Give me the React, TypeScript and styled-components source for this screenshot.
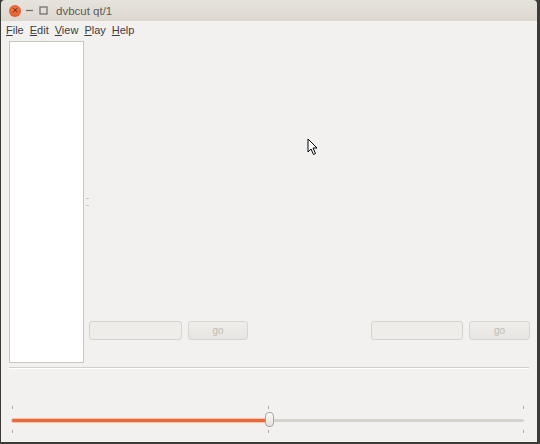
import React from 'react';
import styled, { createGlobalStyle } from 'styled-components';

const GlobalStyle = createGlobalStyle`
  html, body {
    margin: 0;
    padding: 0;
    background: #3c3b37;
  }
  body {
    font-family: "Liberation Sans", "DejaVu Sans", sans-serif;
  }
`;

const Frame = styled.div`
  position: relative;
  width: 540px;
  height: 444px;
  box-sizing: border-box;
  padding: 0 3px 2px 1px;
  background: #3c3b37;
  display: flex;
  flex-direction: column;
`;

const TitleBar = styled.div`
  height: 21px;
  display: flex;
  align-items: center;
  padding-left: 8px;
  background: linear-gradient(#e6e3dd, #dcd8d0);
  border-radius: 4px 4px 0 0;
  flex-shrink: 0;
`;

const WinButtons = styled.div`
  display: flex;
  align-items: center;
  gap: 3px;
  width: 47px;
`;

const CloseButton = styled.div`
  width: 12px;
  height: 12px;
  border-radius: 50%;
  background: radial-gradient(circle at 50% 40%, #f37a4c, #dc5022);
  display: flex;
  align-items: center;
  justify-content: center;
  color: #7a2a10;
  font-size: 8px;
  line-height: 1;
`;

const SmallButton = styled.div`
  width: 11px;
  height: 11px;
  display: flex;
  align-items: center;
  justify-content: center;
`;

const Title = styled.div`
  font-size: 11.5px;
  color: #5e5c58;
`;

const Menubar = styled.div`
  height: 18px;
  display: flex;
  align-items: center;
  gap: 6px;
  padding-left: 5px;
  background: #f2f1ef;
  font-size: 11px;
  color: #3c3c3c;
  flex-shrink: 0;
`;

const MenuItem = styled.span`
  & u {
    text-decoration-thickness: 1px;
  }
`;

const Body = styled.div`
  flex: 1;
  background: #f2f1f0;
  padding: 2px 7px 0 8px;
  display: flex;
  flex-direction: column;
`;

const TopRow = styled.div`
  display: flex;
  height: 322px;
`;

const FileList = styled.div`
  width: 73px;
  background: #ffffff;
  border: 1px solid #c8c5bf;
`;

const Splitter = styled.div`
  width: 5px;
  display: flex;
  align-items: center;
  justify-content: center;
`;

const Grip = styled.div`
  width: 2px;
  height: 6px;
  border-top: 1px dotted #c9c6c0;
  border-bottom: 1px dotted #c9c6c0;
`;

const RightPane = styled.div`
  flex: 1;
  display: flex;
  flex-direction: column;
  justify-content: flex-end;
  padding-bottom: 23px;
`;

const ControlRow = styled.div`
  display: flex;
  justify-content: space-between;
`;

const Group = styled.div`
  display: flex;
  gap: 6px;
`;

const LineEdit = styled.div<{ w: number }>`
  width: ${p => p.w}px;
  height: 19px;
  box-sizing: border-box;
  border: 1px solid #d6d3ce;
  border-radius: 3px;
  background: #efede9;
`;

const GoButton = styled.div<{ w: number }>`
  width: ${p => p.w}px;
  height: 19px;
  box-sizing: border-box;
  border: 1px solid #d8d5d0;
  border-radius: 3px;
  background: linear-gradient(#f0eeeb, #e7e5e1);
  display: flex;
  align-items: center;
  justify-content: center;
  font-size: 10px;
  color: #bdbab5;
`;

const Separator = styled.div`
  margin-top: 4px;
  margin-right: 1px;
  height: 1px;
  background: #d3d0ca;
  border-bottom: 1px solid #ffffff;
`;

const SliderArea = styled.div`
  flex: 1;
  display: flex;
  flex-direction: column;
  justify-content: flex-end;
  padding: 0 6px 8px 3px;
`;

const TickRow = styled.div`
  position: relative;
  height: 4px;
`;

const Tick = styled.div<{ left: string }>`
  position: absolute;
  left: ${p => p.left};
  top: 0;
  width: 1px;
  height: 3px;
  background: #a9a6a1;
`;

const SliderBox = styled.div`
  position: relative;
  height: 20px;
  display: flex;
  align-items: center;
`;

const Track = styled.div`
  flex: 1;
  height: 3px;
  border-radius: 2px;
  background: #d6d3ce;
  display: flex;
`;

const Filled = styled.div`
  height: 3px;
  border-radius: 2px;
  background: #e9683e;
  box-shadow: 0 0 0 1px #f6c3a6;
`;

const Handle = styled.div`
  position: absolute;
  top: 2px;
  width: 9px;
  height: 15px;
  margin-left: -3px;
  box-sizing: border-box;
  border: 1px solid #a8a5a0;
  border-radius: 4px;
  background: linear-gradient(#fbfaf9, #e3e1de);
`;

const Cursor = styled.svg`
  position: absolute;
  left: 307px;
  top: 138px;
`;

const menus = ['File', 'Edit', 'View', 'Play', 'Help'];

export default function App() {
  const pos = 50;
  return (
    <>
      <GlobalStyle />
      <Frame>
        <TitleBar>
          <WinButtons>
            <CloseButton>✕</CloseButton>
            <SmallButton>
              <svg width="9" height="9" viewBox="0 0 9 9">
                <line x1="1" y1="4.5" x2="8" y2="4.5" stroke="#6b6964" strokeWidth="1.2" />
              </svg>
            </SmallButton>
            <SmallButton>
              <svg width="9" height="9" viewBox="0 0 9 9">
                <rect x="1" y="1" width="7" height="7" fill="none" stroke="#6b6964" strokeWidth="1.2" />
              </svg>
            </SmallButton>
          </WinButtons>
          <Title>dvbcut qt/1</Title>
        </TitleBar>
        <Menubar>
          {menus.map(m => (
            <MenuItem key={m}>
              <u>{m[0]}</u>
              {m.slice(1)}
            </MenuItem>
          ))}
        </Menubar>
        <Body>
          <TopRow>
            <FileList />
            <Splitter>
              <Grip />
            </Splitter>
            <RightPane>
              <ControlRow>
                <Group>
                  <LineEdit w={93} />
                  <GoButton w={60}>go</GoButton>
                </Group>
                <Group>
                  <LineEdit w={92} />
                  <GoButton w={61}>go</GoButton>
                </Group>
              </ControlRow>
            </RightPane>
          </TopRow>
          <Separator />
          <SliderArea>
            <TickRow>
              <Tick left="0%" />
              <Tick left="50%" />
              <Tick left="calc(100% - 1px)" />
            </TickRow>
            <SliderBox>
              <Track>
                <Filled style={{ width: `${pos}%` }} />
              </Track>
              <Handle style={{ left: `${pos}%` }} />
            </SliderBox>
            <TickRow>
              <Tick left="0%" />
              <Tick left="50%" />
              <Tick left="calc(100% - 1px)" />
            </TickRow>
          </SliderArea>
        </Body>
        <Cursor width="12" height="18" viewBox="0 0 12 18">
          <path d="M1 1 L1 14 L4 11 L6.5 16.5 L8.5 15.5 L6 10 L10 10 Z" fill="#ffffff" stroke="#000000" strokeWidth="1" strokeLinejoin="round" />
        </Cursor>
      </Frame>
    </>
  );
}
